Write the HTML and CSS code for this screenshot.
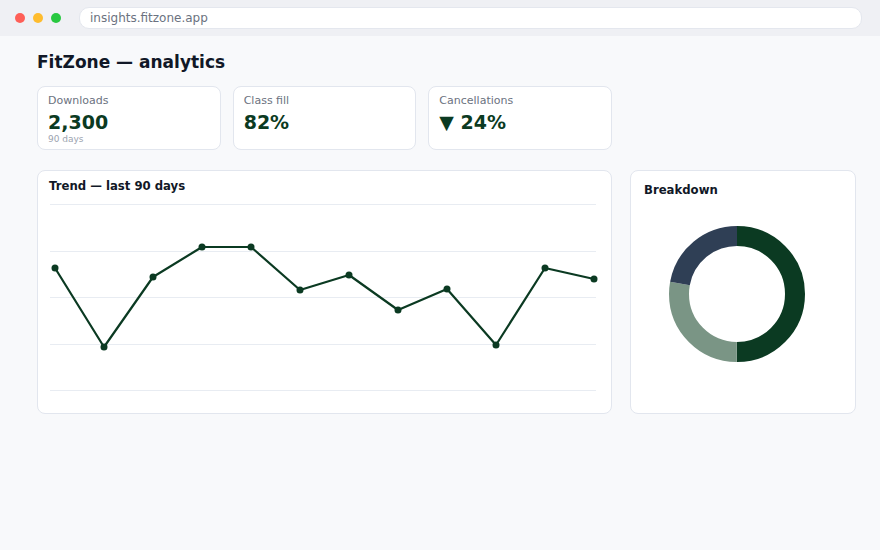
FILE: index.html
```html
<!DOCTYPE html>
<html>
<head>
<meta charset="utf-8">
<link rel="stylesheet" href="styles.css">
</head>
<body>
<div class="chrome">
  <div class="dots"><span class="dot red"></span><span class="dot yellow"></span><span class="dot green"></span></div>
  <div class="url">insights.fitzone.app</div>
</div>
<main class="page">
  <h1 class="title">FitZone — analytics</h1>
  <div class="kpis">
    <div class="card kpi">
      <div class="label">Downloads</div>
      <div class="value">2,300</div>
      <div class="sub">90 days</div>
    </div>
    <div class="card kpi">
      <div class="label">Class fill</div>
      <div class="value">82%</div>
    </div>
    <div class="card kpi">
      <div class="label">Cancellations</div>
      <div class="value">▼ 24%</div>
    </div>
  </div>
  <div class="charts">
    <div class="card trend">
      <div class="card-title trend-title">Trend — last 90 days</div>
      <svg class="trend-svg" width="573" height="215" viewBox="0 0 573 215">
        <g stroke="#e8ecf2" stroke-width="1">
          <line x1="12" y1="8.5" x2="558" y2="8.5"/>
          <line x1="12" y1="55.5" x2="558" y2="55.5"/>
          <line x1="12" y1="101.5" x2="558" y2="101.5"/>
          <line x1="12" y1="148.5" x2="558" y2="148.5"/>
          <line x1="12" y1="194.5" x2="558" y2="194.5"/>
        </g>
        <polyline fill="none" stroke="#0b3a22" stroke-width="2.2" stroke-linejoin="round" points="17,72 66,151 115,81 164,51 213,51 262,94 311,79 360,114 409,93 458,149 507,72 556,83"/>
        <g fill="#0b3a22">
          <circle cx="17" cy="72" r="3.5"/><circle cx="66" cy="151" r="3.5"/><circle cx="115" cy="81" r="3.5"/><circle cx="164" cy="51" r="3.5"/><circle cx="213" cy="51" r="3.5"/><circle cx="262" cy="94" r="3.5"/><circle cx="311" cy="79" r="3.5"/><circle cx="360" cy="114" r="3.5"/><circle cx="409" cy="93" r="3.5"/><circle cx="458" cy="149" r="3.5"/><circle cx="507" cy="72" r="3.5"/><circle cx="556" cy="83" r="3.5"/>
        </g>
      </svg>
    </div>
    <div class="card breakdown">
      <div class="card-title">Breakdown</div>
      <svg class="donut" width="186" height="186" viewBox="0 0 186 186">
        <g transform="rotate(-90 93 93)" fill="none" stroke-width="20">
          <circle cx="93" cy="93" r="58" stroke="#0b3a22" stroke-dasharray="182.2 364.4" stroke-dashoffset="0"/>
          <circle cx="93" cy="93" r="58" stroke="#7a9585" stroke-dasharray="101.2 364.4" stroke-dashoffset="-182.2"/>
          <circle cx="93" cy="93" r="58" stroke="#2f3f55" stroke-dasharray="81 364.4" stroke-dashoffset="-283.4"/>
        </g>
      </svg>
    </div>
  </div>
</main>
</body>
</html>
```

FILE: styles.css
```css
* { box-sizing: border-box; }
html, body { margin: 0; padding: 0; }
body {
  width: 880px;
  height: 550px;
  background: #f8f9fb;
  font-family: "DejaVu Sans", "Liberation Sans", sans-serif;
  color: #111827;
  overflow: hidden;
}
.chrome {
  height: 36px;
  background: #eff0f4;
  display: flex;
  align-items: center;
  padding: 0 18px 0 15px;
}
.dots { display: flex; gap: 8px; margin-right: 18px; }
.dot { width: 10px; height: 10px; border-radius: 50%; display: block; }
.red { background: #fe5f57; }
.yellow { background: #febc2e; }
.green { background: #28c840; }
.url {
  flex: 1;
  height: 22px;
  margin-top: -1px;
  background: #fff;
  border: 1px solid #e4e7ee;
  border-radius: 10px;
  font-size: 12px;
  color: #6b7280;
  line-height: 20px;
  padding-left: 10px;
}
.page { padding: 16px 25px 0 37px; }
.title {
  margin: 0;
  font-size: 17px;
  line-height: 20px;
  font-weight: bold;
  color: #111827;
}
.kpis {
  display: flex;
  gap: 12px;
  width: 575px;
  margin-top: 14px;
}
.card {
  background: #fff;
  border: 1px solid #e2e6ee;
  border-radius: 8px;
}
.kpi {
  flex: 1;
  height: 64px;
  padding: 7px 10px;
}
.label { font-size: 11px; line-height: 14px; color: #6b7280; }
.value {
  font-size: 19px;
  font-weight: bold;
  color: #0b3a22;
  line-height: 24px;
  margin-top: 2px;
}
.sub { font-size: 9px; line-height: 10px; color: #9ca3af; }
.charts {
  display: grid;
  grid-template-columns: 575px 226px;
  gap: 18px;
  margin-top: 20px;
}
.trend, .breakdown { height: 244px; }
.card-title {
  font-size: 11.7px;
  font-weight: bold;
  line-height: 15px;
  color: #111827;
}
.trend-title { padding: 8px 11px 0; }
.trend-svg { display: block; margin-top: 2px; }
.breakdown { padding: 12px 13px; }
.donut { display: block; margin-top: 3px; }
```
